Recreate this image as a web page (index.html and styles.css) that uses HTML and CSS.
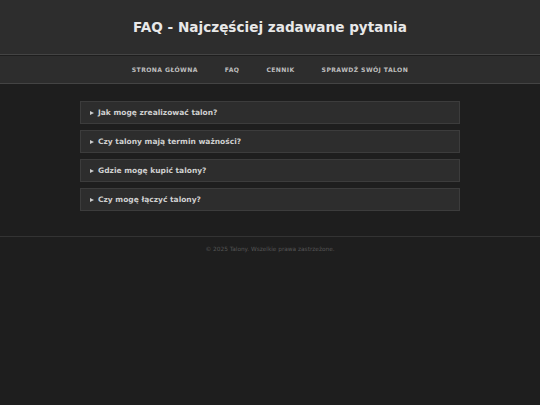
FILE: index.html
```html
<!DOCTYPE html>
<html lang="pl">
<head>
<meta charset="utf-8">
<title>FAQ</title>
<link rel="stylesheet" href="styles.css">
</head>
<body>
<header class="site-header">
  <h1 class="title">FAQ - Najczęściej zadawane pytania</h1>
</header>
<nav class="nav">
  <a href="#">Strona główna</a>
  <a href="#">FAQ</a>
  <a href="#">Cennik</a>
  <a href="#">Sprawdź swój talon</a>
</nav>
<main class="faq">
  <div class="item"><span class="marker"></span>Jak mogę zrealizować talon?</div>
  <div class="item"><span class="marker"></span>Czy talony mają termin ważności?</div>
  <div class="item"><span class="marker"></span>Gdzie mogę kupić talony?</div>
  <div class="item"><span class="marker"></span>Czy mogę łączyć talony?</div>
</main>
<footer class="footer">© 2025 Talony. Wszelkie prawa zastrzeżone.</footer>
</body>
</html>
```

FILE: styles.css
```css
html, body {
  margin: 0;
  padding: 0;
}
body {
  background: #1e1e1e;
  font-family: "DejaVu Sans", Verdana, sans-serif;
  color: #ccc;
  width: 540px;
  height: 405px;
}
.site-header {
  background: #2d2d2d;
  height: 55px;
  display: flex;
  align-items: center;
  justify-content: center;
  border-bottom: 1px solid #444;
  box-sizing: border-box;
}
.title {
  margin: 0;
  font-size: 13.6px;
  font-weight: bold;
  color: #e8e8e8;
  padding-top: 0;
}
.nav {
  background: #2d2d2d;
  height: 28px;
  border-bottom: 1px solid #444;
  box-sizing: border-box;
  display: flex;
  justify-content: center;
  align-items: center;
  gap: 27px;
  margin-top: 1px;
}
.nav a {
  color: #bdbdbd;
  text-decoration: none;
  text-transform: uppercase;
  font-size: 6.1px;
  font-weight: bold;
  letter-spacing: 0.4px;
  padding-top: 0;
}
.faq {
  width: 380px;
  margin: 17px auto 0;
  display: flex;
  flex-direction: column;
  gap: 6px;
}
.item {
  background: #2d2d2d;
  border: 1px solid #3c3c3c;
  height: 23px;
  box-sizing: border-box;
  display: flex;
  align-items: center;
  padding-left: 9px;
  font-size: 7.5px;
  font-weight: bold;
  color: #d0d0d0;
}
.marker {
  width: 0;
  height: 0;
  border-left: 4px solid #ccc;
  border-top: 2.5px solid transparent;
  border-bottom: 2.5px solid transparent;
  margin-right: 4px;
}
.footer {
  margin-top: 25px;
  border-top: 1px solid #333;
  padding-top: 9px;
  text-align: center;
  font-size: 5.8px;
  color: #555;
}
```
